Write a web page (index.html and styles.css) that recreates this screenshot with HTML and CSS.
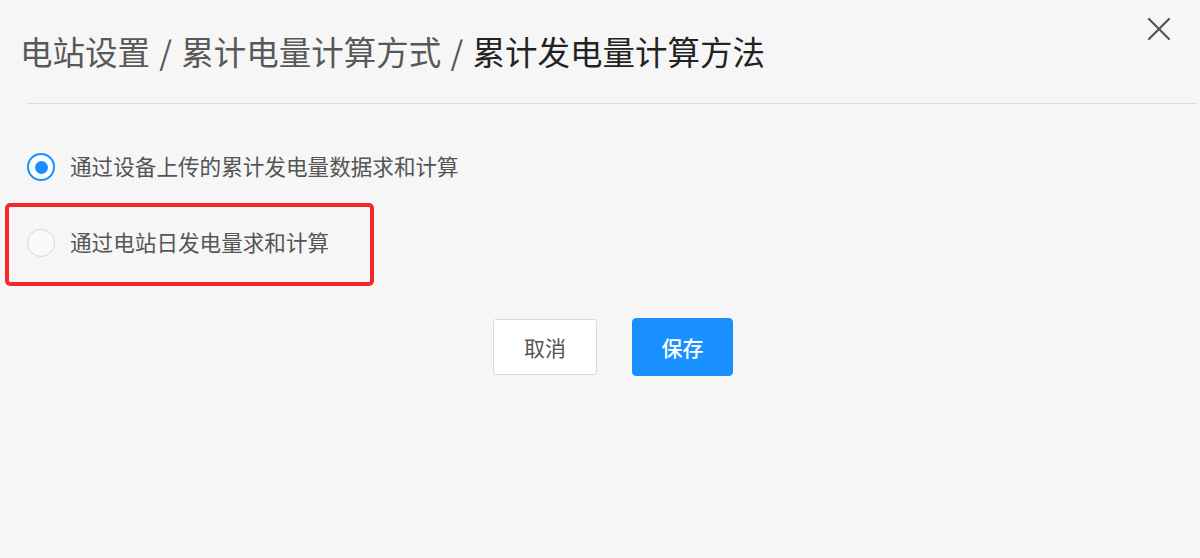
FILE: index.html
```html
<!DOCTYPE html>
<html lang="zh-CN">
<head>
<meta charset="utf-8">
<title>累计发电量计算方法</title>
<link rel="stylesheet" href="styles.css">
</head>
<body>
<div class="dialog">
  <div class="header">
    <div class="title"><span class="crumb">电站设置 / 累计电量计算方式 / </span><span class="current">累计发电量计算方法</span></div>
    <button class="close" aria-label="关闭">
      <svg width="24" height="24" viewBox="0 0 24 24"><path d="M2 2 L22 22 M22 2 L2 22" stroke="#555" stroke-width="2.2" stroke-linecap="round" fill="none"/></svg>
    </button>
  </div>
  <div class="divider"></div>
  <div class="options">
    <label class="option">
      <span class="radio checked"><span class="dot"></span></span>
      <span class="label">通过设备上传的累计发电量数据求和计算</span>
    </label>
    <label class="option marked">
      <span class="radio"></span>
      <span class="label">通过电站日发电量求和计算</span>
      <span class="highlight"></span>
    </label>
  </div>
  <div class="actions">
    <button class="btn btn-cancel">取消</button>
    <button class="btn btn-save">保存</button>
  </div>
</div>
</body>
</html>
```

FILE: styles.css
```css
html, body {
  margin: 0;
  padding: 0;
  background: #f6f6f6;
}
body {
  width: 1200px;
  height: 558px;
  overflow: hidden;
  font-family: "Noto Sans CJK SC", "Noto Sans", sans-serif;
}
.dialog {
  display: flex;
  flex-direction: column;
}
.header {
  display: flex;
  justify-content: space-between;
  align-items: flex-start;
  padding: 17px 29px 0 20px;
}
.title {
  margin-top: 10px;
  height: 48px;
  font-size: 32.5px;
  line-height: 48px;
  white-space: nowrap;
}
.crumb {
  color: #585858;
  word-spacing: 2px;
}
.current {
  color: #222;
}
.close {
  border: none;
  background: transparent;
  padding: 0;
  width: 24px;
  height: 24px;
  display: flex;
}
.divider {
  margin: 28px 3px 0 27px;
  border-top: 1px solid #dcdcdc;
}
.options {
  display: flex;
  flex-direction: column;
  gap: 36px;
  padding: 42px 0 0 27px;
}
.option {
  position: relative;
  display: flex;
  align-items: center;
  height: 40px;
}
.radio {
  width: 28px;
  height: 28px;
  box-sizing: border-box;
  border-radius: 50%;
  border: 1px solid #d6d6d6;
  background: #fafafa;
  display: flex;
  align-items: center;
  justify-content: center;
  margin: 2px 15px 0 0;
  flex: none;
}
.radio.checked {
  border: 2px solid #1890ff;
  background: #fff;
}
.dot {
  width: 13px;
  height: 13px;
  border-radius: 50%;
  background: #1890ff;
}
.label {
  font-size: 21.6px;
  color: #555;
  line-height: 40px;
  white-space: nowrap;
}
.highlight {
  position: absolute;
  left: -22px;
  top: -19px;
  width: 369px;
  height: 83px;
  box-sizing: border-box;
  border: 4px solid #f52828;
  border-radius: 5px;
}
.actions {
  display: flex;
  justify-content: center;
  align-items: center;
  gap: 35px;
  padding-left: 26px;
  margin-top: 56px;
}
.btn {
  font-family: "Noto Sans CJK SC", sans-serif;
  font-size: 21px;
  border-radius: 3px;
  cursor: pointer;
  padding: 0;
}
.btn-cancel {
  width: 104px;
  height: 56px;
  background: #fff;
  border: 1px solid #dadada;
  color: #555;
}
.btn-save {
  width: 101px;
  height: 58px;
  background: #1890ff;
  border: 1px solid #1890ff;
  color: #fff;
  border-radius: 4px;
  font-weight: 500;
}
```
